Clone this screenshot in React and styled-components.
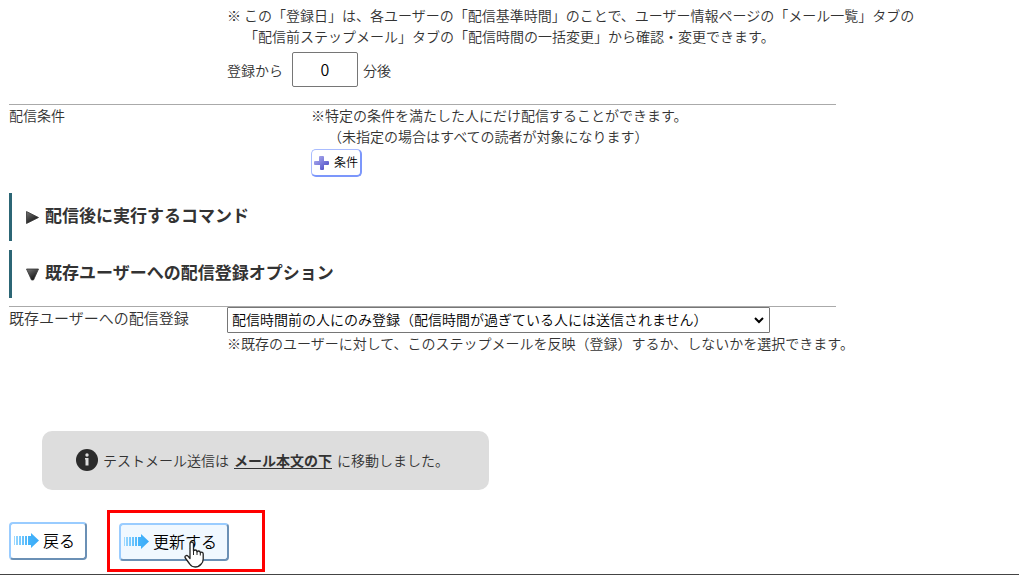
import React from "react";
import styled, { createGlobalStyle } from "styled-components";

const GlobalStyle = createGlobalStyle`
  *, *::before, *::after { box-sizing: border-box; }
  body {
    margin: 0;
    background: #fff;
    color: #333;
    font-family: "Noto Sans CJK JP", "Noto Sans", sans-serif;
    font-size: 14px;
    font-weight: 350;
    line-height: 22px;
  }
  button, input, select { font: inherit; color: #000; }
`;

const Page = styled.form`
  display: flex;
  flex-direction: column;
  min-height: 100vh;
  padding: 5px 9px 0;
  border-bottom: 1px solid #444;
`;

const Field = styled.section`
  display: grid;
  grid-template-columns: ${(p) => p.$label}px 1fr;
  align-items: start;
`;

const Note = styled.p`
  margin: 0;
  line-height: 21px;
  white-space: pre;
`;

const Timing = styled.div`
  display: flex;
  align-items: center;
  gap: 9px;
  margin: 5px 0 17px;

  span { margin-left: -4px; }
`;

const MinuteInput = styled.input`
  width: 66px;
  height: 35px;
  padding: 0 0 2px;
  border: 1px solid #767676;
  border-radius: 2px;
  background: #fff;
  font-size: 16px;
  text-align: center;
`;

const Rule = styled.hr`
  width: 100%;
  max-width: 827px;
  height: 1px;
  margin: 0;
  border: 0;
  background: #aaa;
`;

const Label = styled.label`
  font-size: ${(p) => (p.$large ? 15 : 14)}px;
  line-height: ${(p) => (p.$large ? 22 : 21)}px;
`;

const AddButton = styled.button`
  display: flex;
  align-items: center;
  gap: 4px;
  height: 28px;
  margin-top: 2px;
  padding: 0 2px 2px;
  border: 1px solid #a9bcff;
  border-right: 2px solid #7c97fb;
  border-bottom: 2px solid #7c97fb;
  border-radius: 5px;
  background: #fff;
  font-size: 12px;

  svg { position: relative; top: 1px; }
`;

const Headings = styled.div`
  display: grid;
  gap: 9px;
  margin: 16px 0 8px;
`;

const Heading = styled.h2`
  display: flex;
  align-items: center;
  gap: 6px;
  height: 48px;
  margin: 0;
  padding: 0 14px 4px;
  border-left: 3px solid #2c6675;
  font-size: 17px;
  font-weight: 700;
  line-height: 24px;

  svg { position: relative; top: 2px; }
`;

const SelectBox = styled.div`
  position: relative;
  width: 543px;
  max-width: 100%;

  svg {
    position: absolute;
    right: 5px;
    top: 10px;
    pointer-events: none;
  }
`;

const Select = styled.select`
  display: block;
  appearance: none;
  width: 100%;
  height: 26px;
  padding: 0 20px 2px 4px;
  border: 1px solid #767676;
  border-radius: 1px;
  background: #fff;
  line-height: 22px;
`;

const Notice = styled.div`
  display: flex;
  align-items: center;
  align-self: flex-start;
  height: 59px;
  margin: 77px 33px 20px;
  padding: 0 40px 1px 34px;
  border-radius: 10px;
  background: #ddd;
  white-space: nowrap;

  svg { margin-right: 5px; }

  a {
    margin: 0 5px;
    color: #333;
    font-weight: 700;
    text-underline-offset: 2px;
  }
`;

const Actions = styled.div`
  display: flex;
  align-items: center;
  gap: 20px;
  padding-bottom: 2px;
`;

const Highlight = styled.div`
  padding: 10px 33px 8px 9px;
  border: 3px solid #f00;
`;

const ActionButton = styled.button`
  position: relative;
  display: flex;
  align-items: center;
  gap: 3px;
  height: 38px;
  padding: 0 10px 2px 2px;
  border: 2px solid #99ccff;
  border-right-color: #6b90b5;
  border-bottom-color: #6b90b5;
  border-radius: 4px;
  background: ${(p) => (p.$hovered ? "#f0f8ff" : "#fff")};
  font-size: 16px;
  white-space: nowrap;
`;

const Cursor = styled.svg`
  position: absolute;
  left: 63px;
  top: 16px;
`;

function ArrowIcon() {
  return (
    <svg width="27" height="18" viewBox="0 0 27 18" aria-hidden="true">
      <defs>
        <linearGradient id="arrowFade" gradientUnits="userSpaceOnUse" x1="0" y1="0" x2="26" y2="0">
          <stop offset="0" stopColor="#a5dcff" />
          <stop offset="0.6" stopColor="#45b4fb" />
          <stop offset="1" stopColor="#3aaaf7" />
        </linearGradient>
      </defs>
      <path
        fill="url(#arrowFade)"
        d="M1 5h1v9H1zM3 5h2v9H3zM6 5h2v9H6zM9 5h2v9H9zM12 5h2v9h-2zM15 5h3V2l8 7.500-8 7.500v-3h-3z"
      />
    </svg>
  );
}

function PlusIcon() {
  return (
    <svg width="16" height="16" viewBox="0 0 16 16" aria-hidden="true">
      <defs>
        <linearGradient id="plusShade" x1="0" y1="0" x2="1" y2="1">
          <stop offset="0" stopColor="#b4b4ee" />
          <stop offset="0.5" stopColor="#7d7ddc" />
          <stop offset="1" stopColor="#4242bd" />
        </linearGradient>
      </defs>
      <path
        fill="url(#plusShade)"
        d="M6 1h3a1 1 0 0 1 1 1v4h4a1 1 0 0 1 1 1v2a1 1 0 0 1-1 1h-4v4a1 1 0 0 1-1 1H7a1 1 0 0 1-1-1v-4H1a1 1 0 0 1-1-1V7a1 1 0 0 1 1-1h4V2a1 1 0 0 1 1-1z"
      />
    </svg>
  );
}

function TriangleIcon({ open }) {
  return (
    <svg width="13" height="13" viewBox="0 0 13 13" aria-hidden="true">
      <defs>
        <linearGradient id="triangleShade" x1="0" y1="0" x2="0.6" y2="1">
          <stop offset="0" stopColor="#777" />
          <stop offset="1" stopColor="#111" />
        </linearGradient>
      </defs>
      <path
        fill="url(#triangleShade)"
        stroke="#333"
        strokeWidth="0.8"
        strokeLinejoin="round"
        d={open ? "M.5 1h12L7.500 12h-2z" : "M.5.5L12.500 6.500.5 12.500z"}
      />
    </svg>
  );
}

function InfoIcon() {
  return (
    <svg width="22" height="22" viewBox="0 0 22 22" aria-hidden="true">
      <circle cx="11" cy="11" r="11" fill="#2b2b2b" />
      <circle cx="11" cy="6" r="1.700" fill="#ddd" />
      <path fill="#ddd" d="M9 9h3.500v7.500H9.500v-6H9z" />
    </svg>
  );
}

function HandCursor() {
  return (
    <Cursor width="20" height="27" viewBox="0 0 20 27" aria-hidden="true">
      <path
        fill="#fff"
        stroke="#222"
        strokeWidth="1.3"
        strokeLinejoin="round"
        d="M6 3q0-2 1.700-2T9.500 3v7q.5-1 1.700-1 1.600 0 1.800 1.800.6-.8 1.600-.8 1.500 0 1.700 1.800.5-.6 1.200-.6 1.700 0 1.700 2V18q0 3-2 5-2.500 3-6 3-3.500 0-5.500-3L1.300 17q-.8-1.500.4-2.200Q3 14 4 15.200l2 2.300z"
      />
      <path fill="none" stroke="#222" d="M9.500 9v5M13 10.500V14M16.300 12v2.500" />
    </Cursor>
  );
}

export default function App() {
  return (
    <>
      <GlobalStyle />
      <Page onSubmit={(e) => e.preventDefault()}>
        <Field $label={218}>
          <span />
          <div>
            <Note>※ この「登録日」は、各ユーザーの「配信基準時間」のことで、ユーザー情報ページの「メール一覧」タブの</Note>
            <Note>{"\u3000 「配信前ステップメール」タブの「配信時間の一括変更」から確認・変更できます。"}</Note>
            <Timing>
              <label htmlFor="minutes">登録から</label>
              <MinuteInput id="minutes" type="text" defaultValue="0" />
              <span>分後</span>
            </Timing>
          </div>
        </Field>

        <Rule />
        <Field $label={302}>
          <Label htmlFor="condition">配信条件</Label>
          <div>
            <Note>※特定の条件を満たした人にだけ配信することができます。</Note>
            <Note>{"\u3000 （未指定の場合はすべての読者が対象になります）"}</Note>
            <AddButton id="condition" type="button">
              <PlusIcon />
              条件
            </AddButton>
          </div>
        </Field>

        <Headings>
          <Heading>
            <TriangleIcon />
            配信後に実行するコマンド
          </Heading>
          <Heading>
            <TriangleIcon open />
            既存ユーザーへの配信登録オプション
          </Heading>
        </Headings>

        <Rule />
        <Field $label={218}>
          <Label $large htmlFor="existing">既存ユーザーへの配信登録</Label>
          <div>
            <SelectBox>
              <Select id="existing">
                <option>配信時間前の人にのみ登録（配信時間が過ぎている人には送信されません）</option>
              </Select>
              <svg width="12" height="8" viewBox="0 0 12 8" aria-hidden="true">
                <path d="M2 1l4 4 4-4" fill="none" stroke="#000" strokeWidth="2" />
              </svg>
            </SelectBox>
            <Note>※既存のユーザーに対して、このステップメールを反映（登録）するか、しないかを選択できます。</Note>
          </div>
        </Field>

        <Notice>
          <InfoIcon />
          テストメール送信は
          <a href="#body-bottom">メール本文の下</a>
          に移動しました。
        </Notice>

        <Actions>
          <ActionButton type="button">
            <ArrowIcon />
            戻る
          </ActionButton>
          <Highlight>
            <ActionButton type="submit" $hovered>
              <ArrowIcon />
              更新する
              <HandCursor />
            </ActionButton>
          </Highlight>
        </Actions>
      </Page>
    </>
  );
}
